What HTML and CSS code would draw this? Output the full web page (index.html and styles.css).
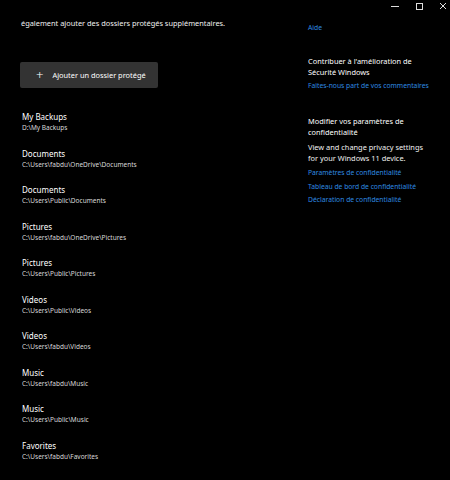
FILE: index.html
```html
<!DOCTYPE html>
<html lang="fr">
<head>
    <meta charset="UTF-8">
    <title>Sécurité Windows - Dossiers protégés</title>
    <link rel="stylesheet" href="styles.css">
</head>
<body>

<div class="window-controls">
    <svg width="8" height="8" viewBox="0 0 8 8"><path d="M0 4.5H8" stroke="#ddd" stroke-width="1"/></svg>
    <svg width="8" height="8" viewBox="0 0 8 8"><rect x="1.5" y="1.5" width="6" height="6" fill="none" stroke="#ddd" stroke-width="1"/></svg>
    <svg width="8" height="8" viewBox="0 0 8 8"><path d="M1 1L7 7M7 1L1 7" stroke="#ddd" stroke-width="1"/></svg>
</div>

<div class="page">
    <div class="main">
        <p class="intro">également ajouter des dossiers protégés supplémentaires.</p>

        <button class="add-btn"><span class="plus">+</span>Ajouter un dossier protégé</button>

        <ul class="folders">
            <li><div class="name">My Backups</div><div class="path">D:\My Backups</div></li>
            <li><div class="name">Documents</div><div class="path">C:\Users\fabdu\OneDrive\Documents</div></li>
            <li><div class="name">Documents</div><div class="path">C:\Users\Public\Documents</div></li>
            <li><div class="name">Pictures</div><div class="path">C:\Users\fabdu\OneDrive\Pictures</div></li>
            <li><div class="name">Pictures</div><div class="path">C:\Users\Public\Pictures</div></li>
            <li><div class="name">Videos</div><div class="path">C:\Users\Public\Videos</div></li>
            <li><div class="name">Videos</div><div class="path">C:\Users\fabdu\Videos</div></li>
            <li><div class="name">Music</div><div class="path">C:\Users\fabdu\Music</div></li>
            <li><div class="name">Music</div><div class="path">C:\Users\Public\Music</div></li>
            <li><div class="name">Favorites</div><div class="path">C:\Users\fabdu\Favorites</div></li>
        </ul>
    </div>

    <div class="side">
        <a class="link" href="#">Aide</a>

        <div class="section">
            <h3>Contribuer à l'amélioration de<br>Sécurité Windows</h3>
            <a class="link" href="#">Faites-nous part de vos commentaires</a>
        </div>

        <div class="section">
            <h3>Modifier vos paramètres de<br>confidentialité</h3>
            <p class="desc">View and change privacy settings<br>for your Windows 11 device.</p>
            <a class="link" href="#">Paramètres de confidentialité</a>
            <a class="link" href="#">Tableau de bord de confidentialité</a>
            <a class="link" href="#">Déclaration de confidentialité</a>
        </div>
    </div>
</div>

</body>
</html>
```

FILE: styles.css
```css
body {
    margin: 0;
    background-color: #000;
    color: #fff;
    font-family: "Noto Sans", "Open Sans", sans-serif;
}

.window-controls {
    position: absolute;
    top: 2px;
    right: 3px;
    display: flex;
    gap: 16px;
}

.page {
    display: grid;
    grid-template-columns: 288px 142px;
    padding-left: 20px;
}

.intro {
    margin: 16px 0 0 1px;
    font-size: 7.4px;
    line-height: 14px;
    color: #f0f0f0;
}

.add-btn {
    margin-top: 32px;
    width: 138px;
    height: 26px;
    padding: 0 0 0 16px;
    display: flex;
    align-items: center;
    background-color: #333;
    color: #fff;
    border: none;
    border-radius: 2px;
    font-family: inherit;
    font-size: 7.4px;
}

.plus {
    font-size: 13px;
    font-weight: 300;
    margin-right: 9px;
    line-height: 1;
}

.folders {
    list-style-type: none;
    margin: 23px 0 0;
    padding: 0 0 0 2px;
}

.folders li {
    height: 22px;
    margin-bottom: 14.5px;
}

.name {
    font-size: 8px;
    line-height: 12px;
}

.path {
    font-size: 6.5px;
    line-height: 10px;
    color: #d8d8d8;
}

.side {
    padding-top: 21.5px;
}

.link {
    display: block;
    color: #2f8be0;
    text-decoration: none;
    font-size: 6.75px;
    line-height: 11px;
    margin-bottom: 2.5px;
}

.section {
    margin-top: 23.5px;
}

.section + .section {
    margin-top: 24.5px;
}

h3 {
    margin: 0 0 2px;
    font-size: 7.4px;
    font-weight: normal;
    line-height: 11px;
}

.desc {
    margin: 4.5px 0 3px;
    font-size: 7.4px;
    line-height: 11px;
    color: #f0f0f0;
}
```
